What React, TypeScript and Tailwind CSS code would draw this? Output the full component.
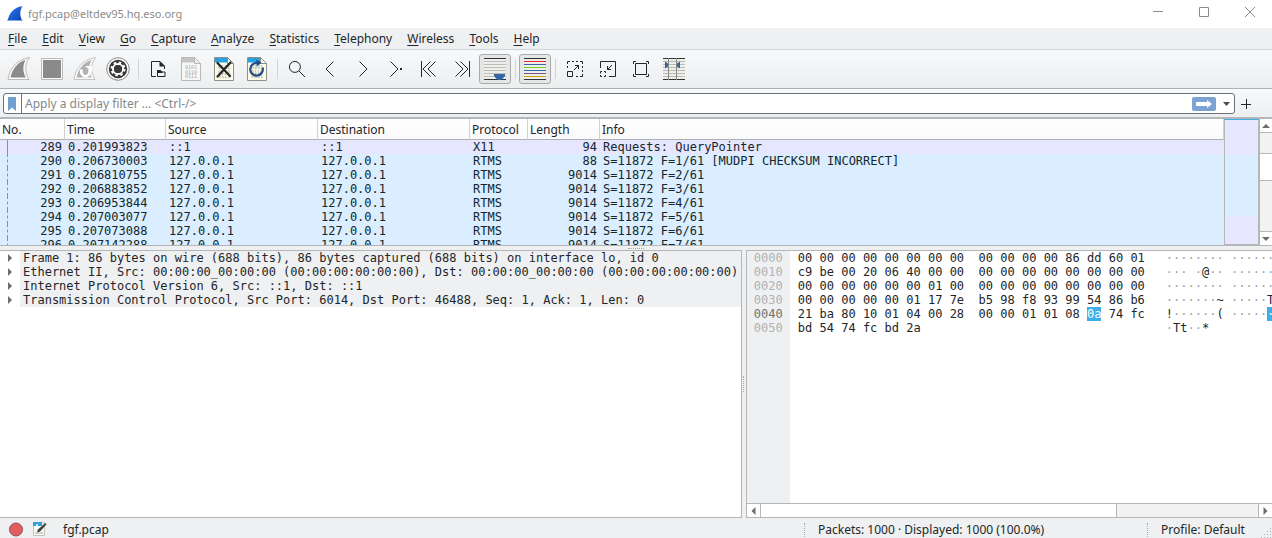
import { useState } from "react";
import type { ReactNode } from "react";

const SANS = "font-['Noto_Sans',sans-serif]";
const MONO = "font-['DejaVu_Sans_Mono',monospace]";

const menus = ["File", "Edit", "View", "Go", "Capture", "Analyze", "Statistics", "Telephony", "Wireless", "Tools", "Help"];

const packets = [
    { no: 289, time: "0.201993823", src: "::1", dst: "::1", proto: "X11", len: 94, info: "Requests: QueryPointer" },
    { no: 290, time: "0.206730003", src: "127.0.0.1", dst: "127.0.0.1", proto: "RTMS", len: 88, info: "S=11872 F=1/61 [MUDPI CHECKSUM INCORRECT]" },
    { no: 291, time: "0.206810755", src: "127.0.0.1", dst: "127.0.0.1", proto: "RTMS", len: 9014, info: "S=11872 F=2/61" },
    { no: 292, time: "0.206883852", src: "127.0.0.1", dst: "127.0.0.1", proto: "RTMS", len: 9014, info: "S=11872 F=3/61" },
    { no: 293, time: "0.206953844", src: "127.0.0.1", dst: "127.0.0.1", proto: "RTMS", len: 9014, info: "S=11872 F=4/61" },
    { no: 294, time: "0.207003077", src: "127.0.0.1", dst: "127.0.0.1", proto: "RTMS", len: 9014, info: "S=11872 F=5/61" },
    { no: 295, time: "0.207073088", src: "127.0.0.1", dst: "127.0.0.1", proto: "RTMS", len: 9014, info: "S=11872 F=6/61" },
    { no: 296, time: "0.207142288", src: "127.0.0.1", dst: "127.0.0.1", proto: "RTMS", len: 9014, info: "S=11872 F=7/61" },
];

const details = [
    "Frame 1: 86 bytes on wire (688 bits), 86 bytes captured (688 bits) on interface lo, id 0",
    "Ethernet II, Src: 00:00:00_00:00:00 (00:00:00:00:00:00), Dst: 00:00:00_00:00:00 (00:00:00:00:00:00)",
    "Internet Protocol Version 6, Src: ::1, Dst: ::1",
    "Transmission Control Protocol, Src Port: 6014, Dst Port: 46488, Seq: 1, Ack: 1, Len: 0",
];

const bytes = [
    "00 00 00 00 00 00 00 00 00 00 00 00 86 dd 60 01",
    "c9 be 00 20 06 40 00 00 00 00 00 00 00 00 00 00",
    "00 00 00 00 00 00 01 00 00 00 00 00 00 00 00 00",
    "00 00 00 00 00 01 17 7e b5 98 f8 93 99 54 86 b6",
    "21 ba 80 10 01 04 00 28 00 00 01 01 08 0a 74 fc",
    "bd 54 74 fc bd 2a",
].map(line => line.split(" "));

const SELECTED_BYTE = 0x4d;

function Icon({ children }: { children: ReactNode }) {
    return (
        <svg width="24" height="24" viewBox="0 0 24 24" fill="none" stroke="#232629" aria-hidden="true">
            {children}
        </svg>
    );
}

const FIN = "M1 22.5C2.5 12 9 2.5 22.5 0.5C17.5 7 17.5 15 22 22.5Z";
const FIN_INNER = "M3.5 20.5C5.5 12 10 5.5 18.5 3C15.5 8.5 15.7 15 18.8 20.5Z";

function Lines({ colors }: { colors: string[] }) {
    return (
        <>
            <path d="M1 1h22v22H1z" fill="#eeeeec" stroke="none" />
            {colors.map((c, i) => (
                <path key={i} d={`M1 ${1.5 + i * 3}h22`} stroke={c} />
            ))}
        </>
    );
}

const GRAY_LINES = ["#2e3436", "#babdb6", "#babdb6", "#babdb6", "#babdb6", "#babdb6", "#babdb6", "#2e3436"];
const COLOR_LINES = ["#2e3436", "#ef2929", "#3465a4", "#73d216", "#3465a4", "#75507b", "#c4a000", "#2e3436"];

function Doc({ muted = false, children }: { muted?: boolean; children?: ReactNode }) {
    return (
        <Icon>
            <path d="M2.5 0.5h13l6 6v17h-19z" fill={muted ? "#f7f7f7" : "#fcfbe8"} stroke={muted ? "#b8b8b8" : "#8f9088"} />
            <path d="M3 1h12.5v4.5H3z" fill={muted ? "#c4c4c4" : "#26a2e0"} stroke="none" />
            <path d="M15.5 0.5v6h6z" fill={muted ? "#f0f0f0" : "#fff"} stroke={muted ? "#b8b8b8" : "#8f9088"} />
            <g fill={muted ? "#a8a8a8" : "#a4a498"} stroke="none" fontSize="5" fontFamily="DejaVu Sans Mono">
                <text x="6" y="12">0101</text>
                <text x="6" y="16.5">0110</text>
                <text x="6" y="21">0111</text>
            </g>
            {children}
        </Icon>
    );
}

type Tool = { label: string; icon: ReactNode; pressed?: boolean };

const toolGroups: Tool[][] = [
    [
        {
            label: "Start capturing packets",
            icon: (
                <Icon>
                    <path d={FIN} fill="#fafafa" stroke="#b9b9b9" />
                    <path d={FIN_INNER} fill="#8a8a8a" stroke="none" />
                </Icon>
            ),
        },
        {
            label: "Stop capturing packets",
            icon: (
                <Icon>
                    <path d="M1.5 1.5h21v21h-21z" fill="#fafafa" stroke="#b9b9b9" />
                    <path d="M3 3h18v18H3z" fill="#8a8a8a" stroke="none" />
                </Icon>
            ),
        },
        {
            label: "Restart current capture",
            icon: (
                <Icon>
                    <path d={FIN} fill="#fafafa" stroke="#c4c4c4" />
                    <path d={FIN_INNER} fill="#b2b2b2" stroke="none" />
                    <path d="M9 12.5a4.200 4.200 0 1 0 7 0" stroke="#fff" strokeWidth="2.5" />
                    <path d="M12 9h7v6z" fill="#fff" stroke="none" />
                </Icon>
            ),
        },
        {
            label: "Capture options",
            icon: (
                <Icon>
                    <circle cx="12" cy="12" r="11.3" fill="#fafafa" stroke="#8a8a8a" />
                    <circle cx="12" cy="12" r="9.2" fill="#383838" stroke="none" />
                    <circle cx="12" cy="12" r="5" stroke="#fff" strokeWidth="2" />
                    <circle cx="12" cy="12" r="6.5" stroke="#fff" strokeWidth="2" strokeDasharray="2.5 2.605" />
                    <circle cx="12" cy="12" r="4" fill="#383838" stroke="none" />
                </Icon>
            ),
        },
    ],
    [
        {
            label: "Open a capture file",
            icon: (
                <Icon>
                    <path d="M10 19.5H5.5v-15h8.5l4.5 4.5v3" />
                    <path d="M13.5 4v5.5h5.5z" fill="#232629" stroke="none" />
                    <path d="M11.5 19.5v-6h3l1 1.5h3.500v4.500z" />
                    <path d="M11.5 13.5h3l1.5 2h-4.5z" fill="#232629" />
                </Icon>
            ),
        },
        { label: "Save this capture file", icon: <Doc muted /> },
        {
            label: "Close this capture file",
            icon: (
                <Doc>
                    <path d="M5.5 6L18 19M18.5 5.5L5.5 19.5" stroke="#22262a" strokeWidth="2.2" strokeLinecap="round" />
                </Doc>
            ),
        },
        {
            label: "Reload this file",
            icon: (
                <Doc>
                    <path d="M17.6 10.5a6.300 6.300 0 1 1-5.600-4.500" stroke="#204a87" strokeWidth="2.2" />
                    <path d="M11.5 2.5v7l5-3.500z" fill="#204a87" stroke="none" />
                </Doc>
            ),
        },
    ],
    [
        { label: "Find a packet", icon: <Icon><circle cx="9.9" cy="9.9" r="5.5" /><path d="M14 14l6 6" /></Icon> },
        { label: "Go to the previous packet", icon: <Icon><path d="M15.5 4.5L8 12l7.5 7.5" /></Icon> },
        { label: "Go to the next packet", icon: <Icon><path d="M8.5 4.5L16 12l-7.5 7.5" /></Icon> },
        { label: "Go to specified packet", icon: <Icon><path d="M6.5 4.5L14 12l-7.5 7.5" /><path d="M16 11h2v2h-2z" fill="#232629" stroke="none" /></Icon> },
        { label: "Go to the first packet", icon: <Icon><path d="M4.5 4v16M13.5 4.5L6 12l7.5 7.5M18.5 4.5L11 12l7.5 7.5" /></Icon> },
        { label: "Go to the last packet", icon: <Icon><path d="M19.5 4v16M5.5 4.5L13 12l-7.5 7.5M10.5 4.5L18 12l-7.5 7.5" /></Icon> },
        {
            label: "Scroll to the last packet during live capture",
            pressed: true,
            icon: (
                <Icon>
                    <Lines colors={GRAY_LINES} />
                    <path d="M11 17h11v2l-3.500 4h-4L11 19z" fill="#3465a4" stroke="none" />
                </Icon>
            ),
        },
    ],
    [{ label: "Colorize packets", pressed: true, icon: <Icon><Lines colors={COLOR_LINES} /></Icon> }],
    [
        {
            label: "Enlarge main window text",
            icon: (
                <Icon>
                    <path d="M4.5 14.5h5v5h-5z" />
                    <path d="M4.5 11V9M4.5 7V4.5H7M9 4.5h2M13 4.5h2M17 4.5h2.5V7M19.5 9v2M19.5 13v2M19.5 17v2.5H17M15 19.5h-2" />
                    <path d="M11 13l4.5-4.5M12 8.5h3.5v3.5" />
                </Icon>
            ),
        },
        {
            label: "Shrink main window text",
            icon: (
                <Icon>
                    <path d="M4.5 11V4.5h15v15H13" />
                    <path d="M4.5 16.5v-2H6M8 14.5h1.5V16M9.5 18v1.5H8M6 19.5H4.5V18" />
                    <path d="M16 8l-4.5 4.5M11.5 9v3.5H15" />
                </Icon>
            ),
        },
        {
            label: "Return text to its normal size",
            icon: (
                <Icon>
                    <path d="M6.5 6.5h11v11h-11z" />
                    <path d="M4.5 7V4.5H7M17 4.5h2.5V7M19.5 17v2.5H17M7 19.5H4.5V17" />
                </Icon>
            ),
        },
        {
            label: "Resize columns to content",
            icon: (
                <Icon>
                    <Lines colors={GRAY_LINES} />
                    <path d="M6.5 1v22M14.5 1v22" stroke="#888a85" />
                    <path d="M3 4.5l3 2v3l-3 2zM18 4.5l-3 2v3l3 2z" fill="#3465a4" stroke="none" />
                </Icon>
            ),
        },
    ],
];

function TitleBar() {
    return (
        <header className="flex h-7 shrink-0 items-center bg-white pl-[7px] text-[#8c8c8c]">
            <svg width="16" height="16" viewBox="0 0 16 16" className="mr-[5px]" aria-hidden="true">
                <defs>
                    <linearGradient id="fin" x1="0" y1="0" x2="1" y2="1">
                        <stop offset="0" stopColor="#2f7cf0" />
                        <stop offset="1" stopColor="#0a3fae" />
                    </linearGradient>
                </defs>
                <path d="M0.5 15C2 7 7 1 15.5 0.2C12.5 5 12.5 10 15.5 15Z" fill="url(#fin)" />
                <path d="M0.5 14.5h15" stroke="#7fa6d8" />
            </svg>
            <h1 className="flex-1 text-[11px]">fgf.pcap@eltdev95.hq.eso.org</h1>
            <div className="flex gap-[2px]">
                <WindowButton label="Minimize" d="M1 5.5h10" />
                <WindowButton label="Maximize" d="M1.5 1.5h9v9h-9z" />
                <WindowButton label="Close" d="M1 1l10 10M11 1L1 11" />
            </div>
        </header>
    );
}

function WindowButton({ label, d }: { label: string; d: string }) {
    return (
        <button aria-label={label} className="flex h-7 w-11 items-start justify-center pt-[6px]">
            <svg width="12" height="12" viewBox="0 0 12 12" fill="none" stroke="#8c8c8c"><path d={d} /></svg>
        </button>
    );
}

function ToolBar() {
    return (
        <div role="toolbar" className="flex h-[39px] shrink-0 items-center gap-px border-b border-[#aeb0b2] bg-linear-to-b from-[#f8f9fa] to-[#edeef0] pl-[3px]">
            {toolGroups.map((group, i) => (
                <div key={i} className="flex items-center gap-px">
                    {i > 0 && (
                        <span className="flex w-[6px] justify-center">
                            <span className="h-5 w-px bg-[#d0d2d4]" />
                        </span>
                    )}
                    {group.map(tool => (
                        <button
                            key={tool.label}
                            aria-label={tool.label}
                            aria-pressed={tool.pressed}
                            className={
                                tool.pressed
                                    ? "flex h-[30px] w-8 items-center justify-center rounded-[3px] border border-[#a8aaac] bg-[#e5e6e6]"
                                    : "flex h-[30px] w-8 items-center justify-center"
                            }
                        >
                            {tool.icon}
                        </button>
                    ))}
                </div>
            ))}
        </div>
    );
}

function FilterBar() {
    const [filter, setFilter] = useState("");

    return (
        <div className="flex h-[30px] shrink-0 items-start border-b-2 border-[#b4b6b8] bg-linear-to-b from-[#f8f9fa] to-[#edeef0] pt-1 pl-[3px]">
            <div className="flex h-[21px] flex-1 items-center rounded-[3px] border border-[#6e7173] bg-white">
                <button aria-label="Filter bookmarks" className="flex h-full w-[18px] items-center justify-center border-r border-[#6e7173] pr-px">
                    <svg width="8" height="14" viewBox="0 0 8 14"><path d="M0 0h8v14l-4-3.5L0 14z" fill="#729fcf" /></svg>
                </button>
                <input
                    aria-label="Display filter"
                    placeholder="Apply a display filter … <Ctrl-/>"
                    value={filter}
                    onChange={e => setFilter(e.target.value)}
                    className="h-full min-w-0 flex-1 pl-[3px] outline-none placeholder:text-[#85888a]"
                />
                <button aria-label="Apply display filter">
                    <svg width="24" height="14" viewBox="0 0 24 14">
                        <rect width="24" height="14" rx="2" fill="#7ba3d3" />
                        <path d="M4 5h11V3l5 4-5 4V9H4z" fill="#fff" />
                    </svg>
                </button>
                <button aria-label="Recent filters" className="flex h-full w-[18px] items-center justify-center pl-[3px]">
                    <svg width="7" height="4" viewBox="0 0 7 4"><path d="M0 0h7L3.5 4z" fill="#4d4d4d" /></svg>
                </button>
            </div>
            <button aria-label="Add a filter button" className="flex h-[21px] w-[37px] items-center justify-start pl-[5px]">
                <svg width="12" height="12" viewBox="0 0 12 12" stroke="#232629"><path d="M1 6.5h10M6.5 1v10" /></svg>
            </button>
        </div>
    );
}

const thClass = "h-[21px] border-b border-r border-b-[#aeb0b2] border-r-[#cfd1d3] bg-linear-to-b from-white to-[#fafafa] pt-[2px] pl-[2px] text-left font-normal";

function PacketList() {
    return (
        <section className="flex min-h-0 grow-[126] basis-0 overflow-hidden border-b border-[#b4b6b8] bg-white">
            <div className="min-w-0 flex-1 overflow-hidden bg-[#daeeff]">
                <table className="w-full table-fixed border-separate border-spacing-0 whitespace-nowrap">
                    <colgroup>
                        <col className="w-[65px]" />
                        <col className="w-[101px]" />
                        <col className="w-[152px]" />
                        <col className="w-[152px]" />
                        <col className="w-[58px]" />
                        <col className="w-[72px]" />
                        <col />
                    </colgroup>
                    <thead>
                        <tr>
                            {["No.", "Time", "Source", "Destination", "Protocol", "Length", "Info"].map(h => (
                                <th key={h} className={thClass}>{h}</th>
                            ))}
                        </tr>
                    </thead>
                    <tbody className={`${MONO} leading-[14px] text-[#12272e]`}>
                        {packets.map((p, i) => (
                            <tr key={p.no} className={p.proto === "X11" ? "bg-[#e7e6ff]" : "bg-[#daeeff]"}>
                                <td className="pl-[7px]">
                                    {/* conversation marker */}
                                    <div className={i === 0 ? "border-l border-[#8b9196] pr-[3px] text-right" : "border-l border-dashed border-[#8b9196] pr-[3px] text-right"}>{p.no}</div>
                                </td>
                                <td className="pl-[3px]">{p.time}</td>
                                <td className="pl-[3px]">{p.src}</td>
                                <td className="pl-[3px]">{p.dst}</td>
                                <td className="pl-[3px]">{p.proto}</td>
                                <td className="pr-[3px] text-right">{p.len}</td>
                                <td className="pl-[3px]">{p.info}</td>
                            </tr>
                        ))}
                    </tbody>
                </table>
            </div>
            <div className="flex w-[35px] flex-col border-x border-t border-b border-[#b4b6b8] border-t-[#3daee9]">
                <div className="grow-[35] bg-[#e7e6ff]" />
                <div className="grow-[61] bg-[#daeeff]" />
                <div className="grow-[28] bg-[#e7e6ff]" />
            </div>
            <div className="flex w-[13px] flex-col border-l border-[#b4b6b8] bg-[#f2f2f2]">
                <ScrollButton label="Scroll up" d="M0 5l4-4 4 4z" className="flex h-[14px] items-center justify-center border-b border-[#b4b6b8] bg-white" />
                <div className="grow-[20]" />
                <div className="grow-[26] border-y border-[#b4b6b8] bg-white" />
                <div className="grow-[51]" />
                <ScrollButton label="Scroll down" d="M0 1l4 4 4-4z" className="flex h-[14px] items-center justify-center border-t border-[#b4b6b8] bg-white" />
            </div>
        </section>
    );
}

function ScrollButton({ label, d, className }: { label: string; d: string; className: string }) {
    return (
        <button aria-label={label} className={className}>
            <svg width="8" height="6" viewBox="0 0 8 6"><path d={d} fill="#6b6e70" /></svg>
        </button>
    );
}

function PacketDetails() {
    return (
        <section className={`${MONO} min-w-0 grow-[742] basis-0 overflow-hidden border-y border-r border-[#b4b6b8] bg-white leading-[14px]`}>
            <ul>
                {details.map(line => (
                    <li key={line} className="flex whitespace-nowrap">
                        <button aria-label="Expand" className="flex w-5 shrink-0 items-center pl-2">
                            <svg width="4" height="8" viewBox="0 0 4 8"><path d="M0 0l4 4-4 4z" fill="#6b6e70" /></svg>
                        </button>
                        <span className="flex-1 bg-[#eff0f1] pl-[3px]">{line}</span>
                    </li>
                ))}
            </ul>
        </section>
    );
}

function HexText({ row, cells }: { row: number; cells: string[] }) {
    return (
        <>
            {cells.map((b, i) => (
                <span key={i}>
                    {i === 8 ? " " : ""}
                    <span className={row * 16 + i === SELECTED_BYTE ? "bg-[#3daee9] text-white" : ""}>{b}</span>
                    {i < 15 ? " " : ""}
                </span>
            ))}
        </>
    );
}

function AsciiText({ row, cells }: { row: number; cells: string[] }) {
    return (
        <>
            {cells.map((b, i) => {
                const code = parseInt(b, 16);
                const printable = code >= 0x20 && code < 0x7f;
                const color = row * 16 + i === SELECTED_BYTE ? "bg-[#3daee9] text-white" : printable ? "" : "text-[#a3a5a7]";
                return (
                    <span key={i}>
                        {i === 8 ? " " : ""}
                        <span className={color}>{printable ? String.fromCharCode(code) : "·"}</span>
                    </span>
                );
            })}
        </>
    );
}

function PacketBytes() {
    return (
        <section className="flex min-w-0 grow-[526] basis-0 flex-col border-y border-l border-[#b4b6b8] bg-white">
            <div className={`${MONO} flex min-h-0 flex-1 overflow-hidden whitespace-pre leading-[14px]`}>
                <div className="w-[43px] shrink-0 bg-[#eff0f1] pl-[7px] text-[#b0b2b4]">
                    {bytes.map((_, row) => (
                        <div key={row} className={row === SELECTED_BYTE >> 4 ? "text-[#707375]" : ""}>
                            {(row * 16).toString(16).padStart(4, "0")}
                        </div>
                    ))}
                </div>
                <div className="w-[376px] shrink-0 pl-2">
                    {bytes.map((cells, row) => <div key={row}><HexText row={row} cells={cells} /></div>)}
                </div>
                <div>
                    {bytes.map((cells, row) => <div key={row}><AsciiText row={row} cells={cells} /></div>)}
                </div>
            </div>
            <div className="flex h-[14px] shrink-0 border-t border-[#b4b6b8] bg-[#f2f2f2]">
                <button aria-label="Scroll left" className="flex w-[14px] items-center justify-center border-r border-[#b4b6b8] bg-white">
                    <svg width="5" height="8" viewBox="0 0 5 8"><path d="M4.5 0v8L0.5 4z" fill="#6b6e70" /></svg>
                </button>
                <div className="grow-[356] border-r border-[#b4b6b8] bg-white" />
                <div className="grow-[141]" />
                <button aria-label="Scroll right" className="flex w-[14px] items-center justify-center border-l border-[#b4b6b8] bg-white">
                    <svg width="5" height="8" viewBox="0 0 5 8"><path d="M0.5 0v8L4.5 4z" fill="#6b6e70" /></svg>
                </button>
            </div>
        </section>
    );
}

function StatusBar() {
    return (
        <footer className="flex h-5 shrink-0 items-center pt-1 pl-2">
            <button aria-label="Expert information">
                <svg width="16" height="16" viewBox="0 0 16 16"><circle cx="8" cy="7.500" r="6.500" fill="#e45c5e" stroke="#8c5052" /></svg>
            </button>
            <button aria-label="Edit capture comment" className="ml-2">
                <svg width="16" height="16" viewBox="0 0 16 16">
                    <path d="M1.5 0.5h11v13h-11z" fill="#f4f5ee" stroke="#c3c5c0" />
                    <path d="M1 0h9v4H1z" fill="#2fa0dc" />
                    <path d="M5 2v6M2.5 5h5" stroke="#fff" strokeWidth="1.5" />
                    <path d="M3 11h8" stroke="#aeb0aa" />
                    <path d="M5 10.500l1-3 7.300-6.500 1.200 1.200L8 9.500z" fill="#3a3d3e" />
                </svg>
            </button>
            <span className="ml-[15px] flex-1">fgf.pcap</span>
            <span className="h-[14px] border-l border-dotted border-[#a8aaac]" />
            <span className="w-[342px] pl-[13px]">Packets: 1000 · Displayed: 1000 (100.0%)</span>
            <span className="h-[14px] border-l border-dotted border-[#a8aaac]" />
            <button className="w-[112px] pl-[13px] text-left">Profile: Default</button>
            <svg width="12" height="12" viewBox="0 0 12 12" className="self-end" aria-hidden="true">
                <path d="M1 11.5h11M4 8.5h8M7 5.5h5M10 2.5h2" stroke="#a8aaac" strokeDasharray="1 2" />
            </svg>
        </footer>
    );
}

export default function App() {
    return (
        <div className={`${SANS} flex h-screen flex-col overflow-hidden bg-[#eff0f1] text-[12px] leading-4 text-[#232629]`}>
            <TitleBar />
            <nav className="flex h-[22px] shrink-0 items-center gap-px border-b border-[#d2d4d6] pl-px">
                {menus.map(name => (
                    <button key={name} className="px-[7px]">
                        <span className="underline underline-offset-2">{name[0]}</span>{name.slice(1)}
                    </button>
                ))}
            </nav>
            <ToolBar />
            <FilterBar />
            <main className="flex min-h-0 flex-1 flex-col">
                <PacketList />
                <div className="flex h-1 shrink-0 items-center justify-center">
                    <span className="w-4 border-t border-dotted border-[#a8aaac]" />
                </div>
                <div className="flex min-h-0 grow-[268] basis-0">
                    <PacketDetails />
                    <div className="flex w-1 shrink-0 items-center justify-center">
                        <span className="h-4 border-l border-dotted border-[#a8aaac]" />
                    </div>
                    <PacketBytes />
                </div>
            </main>
            <StatusBar />
        </div>
    );
}
